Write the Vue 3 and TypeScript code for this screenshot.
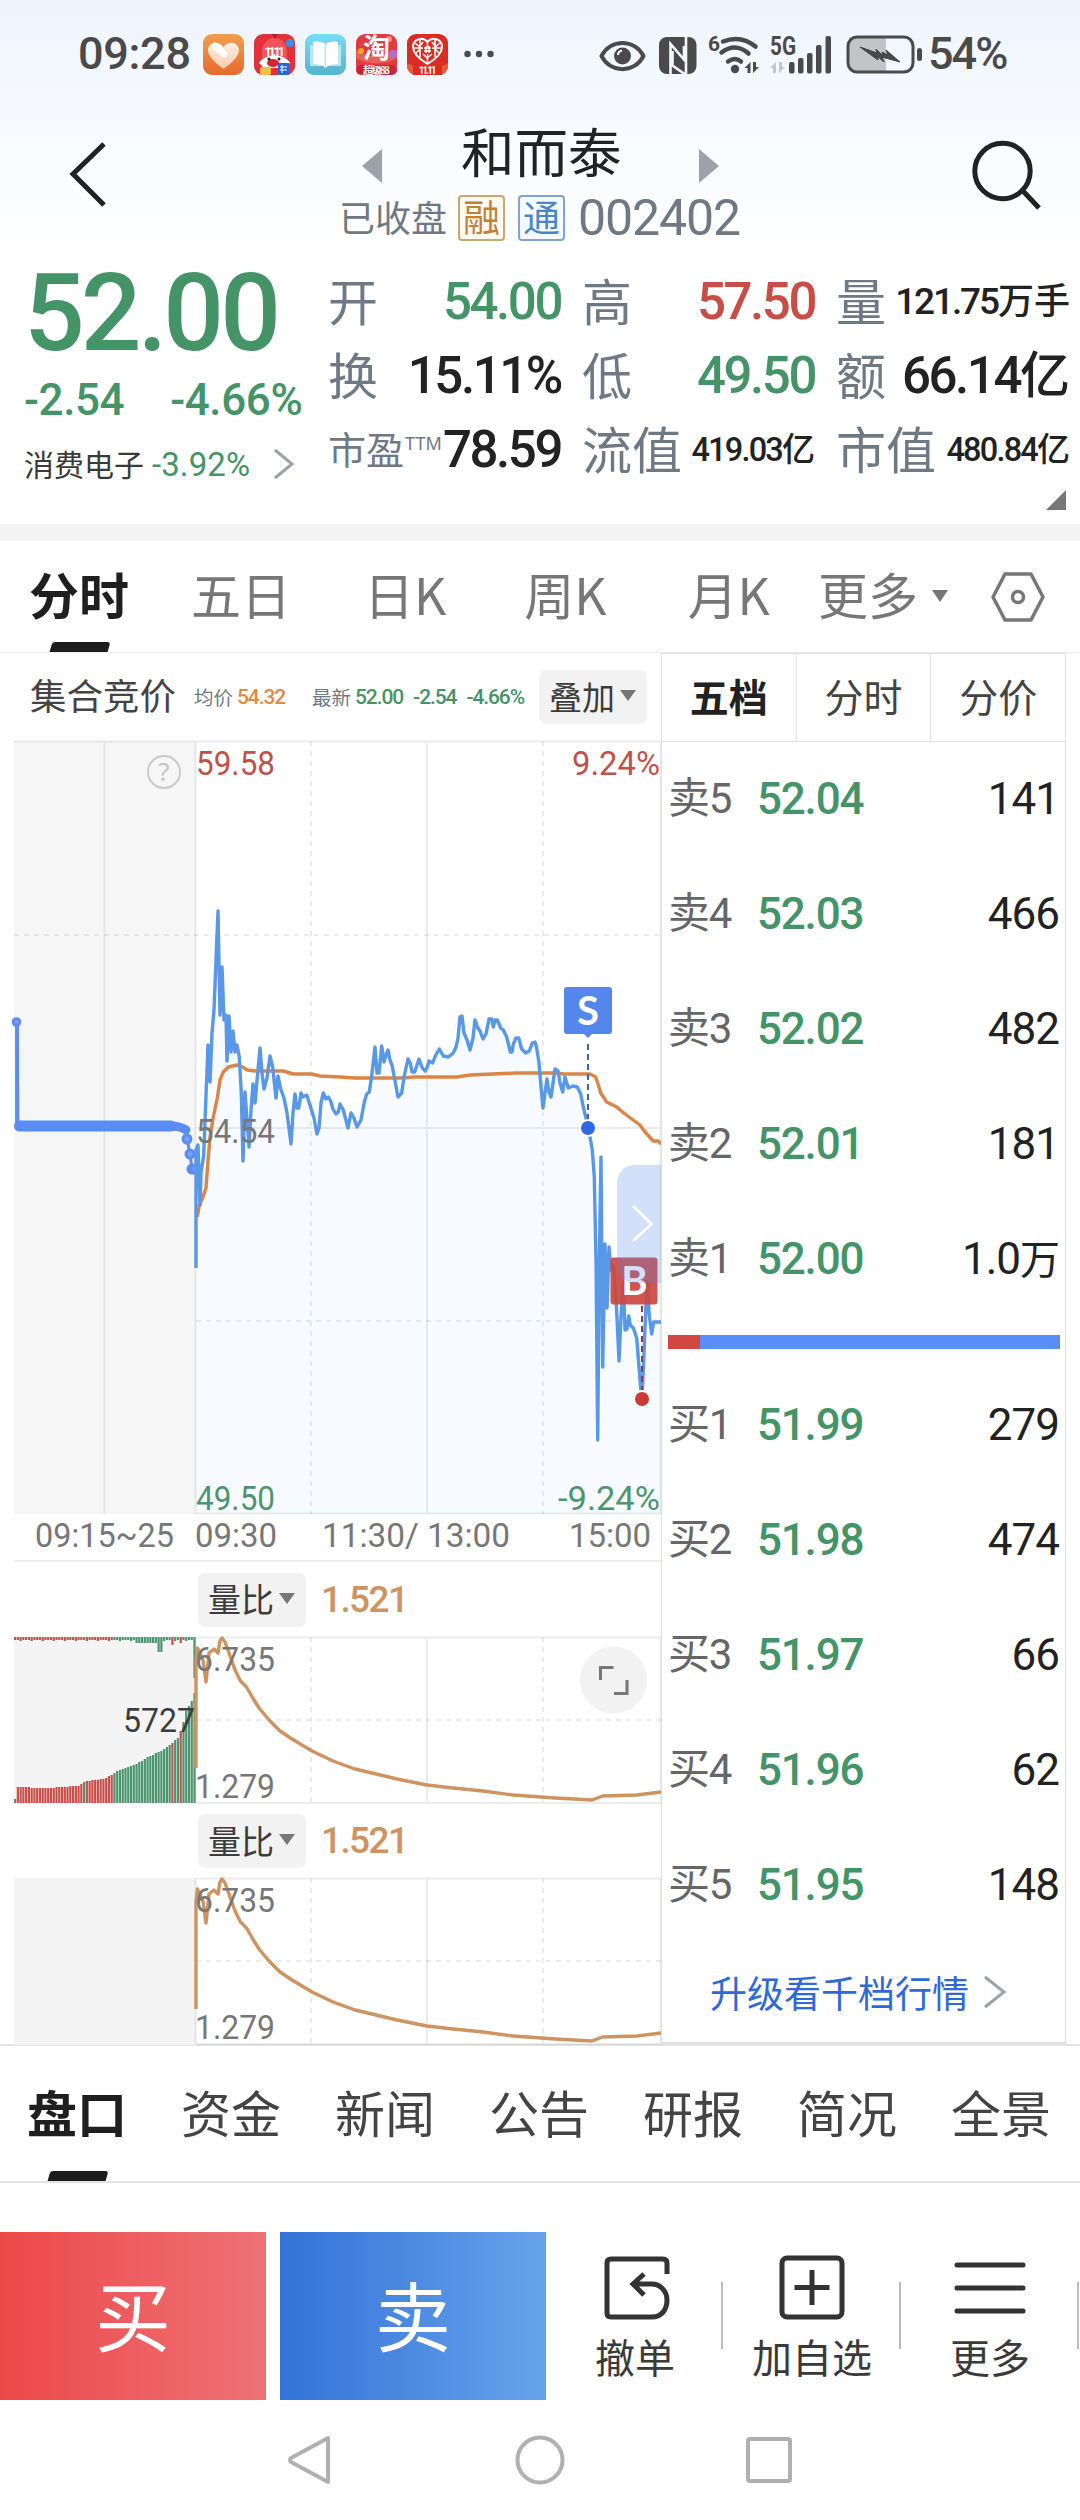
<script setup lang="ts">
interface Stat {
  label: string
  value: string
  unit?: string
  sup?: string
  tone?: 'up' | 'down'
  size?: 'mid' | 'small'
}
interface Level {
  label: string
  price: string
  volume: string
  unit?: string
}
interface Bar {
  x: number
  y: number
  h: number
  fill: string
}

const stats: Stat[] = [
  { label: '开', value: '54.00', tone: 'down' },
  { label: '高', value: '57.50', tone: 'up' },
  { label: '量', value: '121.75', unit: '万手', size: 'mid' },
  { label: '换', value: '15.11%' },
  { label: '低', value: '49.50', tone: 'down' },
  { label: '额', value: '66.14', unit: '亿' },
  { label: '市盈', sup: 'TTM', value: '78.59' },
  { label: '流值', value: '419.03', unit: '亿', size: 'small' },
  { label: '市值', value: '480.84', unit: '亿', size: 'small' },
]

const sells: Level[] = [
  { label: '卖5', price: '52.04', volume: '141' },
  { label: '卖4', price: '52.03', volume: '466' },
  { label: '卖3', price: '52.02', volume: '482' },
  { label: '卖2', price: '52.01', volume: '181' },
  { label: '卖1', price: '52.00', volume: '1.0', unit: '万' },
]
const buys: Level[] = [
  { label: '买1', price: '51.99', volume: '279' },
  { label: '买2', price: '51.98', volume: '474' },
  { label: '买3', price: '51.97', volume: '66' },
  { label: '买4', price: '51.96', volume: '62' },
  { label: '买5', price: '51.95', volume: '148' },
]

const infoTabs = ['盘口', '资金', '新闻', '公告', '研报', '简况', '全景']

const priceLine =
  '196,1268 196,1150 198,1145 200,1205 201,1173 203.7,1155 205.3,1113 208,1045 210,1082 212,1033 214,1010 216,960 218,911 220,1015 222,967 224,1020 226,1015 227,1061 229,1016 231,1052 233,1031 235,1052 237,1045 239.3,1057 241.3,1093 243,1161 245,1092 249,1147 251,1110 253,1084 255,1103 257.7,1073 260,1048 262,1073 264,1089 267,1078 270,1056 272.7,1067 276,1098 278,1076 280.7,1089 284,1098 287,1113 291,1144 293,1113 295,1094 296.7,1108 298.7,1108 301,1093 302.7,1097 306.7,1095 310,1105 314,1118 317,1134 319,1128 321,1103 323.3,1093 326,1099 328.3,1097 330.7,1101 333,1109 336,1114 338.3,1112 340,1104 343.3,1110 348,1128 351,1113 354,1118 357,1127 361,1120 364.3,1102 366.7,1094 369.3,1092 372,1073 375,1047 377,1073 379,1073 381.7,1046 384,1062 386,1055 388,1050 390,1060 392,1065 394.3,1077 398,1097 401.7,1093 404,1077 408,1059 410.3,1063 412,1072 414.7,1072 419,1059 422.3,1068 425.3,1071 427.3,1067 429,1061 432.7,1063 435.3,1056 439.3,1049 443.3,1056 448.3,1057 453.3,1053 456,1047 458,1038 460,1017 462,1016 464,1033 467,1040 470,1050 473,1038 475,1020 477.3,1027 480,1031 483,1039 486,1034 489,1019 491.7,1019 493.3,1027 495,1020 497.3,1020 500.7,1028 503.3,1030 506.7,1037 510.3,1052 512,1052 513.3,1044 516,1038 518.7,1038 521.7,1049 525.7,1053 529.3,1051 532.3,1043 535,1042 536.7,1048 539,1063 540.7,1083 543,1108 545,1093 547,1079 549,1092 551,1097 552.7,1085 555,1069 558,1071 560,1083 562.7,1092 565,1077 568.3,1088 573.3,1086 577.3,1087 580.7,1094 583.3,1107 586,1118 588,1128 590,1137 592.3,1150 594.3,1177 596,1260 597.7,1440 599.3,1260 601,1157 602.7,1367 605,1244 607,1308 609,1247 611,1270 613.3,1265 616,1297 619,1361 621.3,1310 623.3,1282 625,1330 627,1329 628.7,1316 630.3,1325 633.3,1328 636.7,1338 638.7,1363 640.7,1388 642,1399 643.7,1360 646,1303 647.7,1282 649,1313 651.7,1334 653.7,1322 661,1322'
const priceArea = `196,1514 ${priceLine} 661,1514`

const averageLine =
  '197.3,1217 199,1207 203.3,1196 206,1188 207.3,1170 210,1137 213.3,1117 217.3,1098 220,1080 223.3,1072 228.3,1067 236.7,1065 242.7,1067 247.3,1070 255,1071 283.3,1071 293.3,1074 311.7,1074 320,1076 340,1077 355,1078 403.3,1078 413.3,1077 456.7,1077 470,1075 516.7,1073 556.7,1073 563.3,1074 590,1074 595.7,1077 598.3,1085 600.7,1093 606.7,1102 616.7,1107 625,1114 640,1125 645,1132 653.3,1141 658.3,1141 661,1144'

const ratioLine =
  '196,1768 196,1660 197.5,1648 203,1660 206,1682 209,1653 214,1649 218,1653 220,1641 222,1638 225,1642 229,1653 235,1670 240.5,1681 246.5,1687 254,1700 259,1708 269,1720 280,1731 292,1739 312,1751 333,1761 355,1769 372,1773 397,1779 427,1785 453,1788 483,1791 513,1795 555.5,1798 592,1800 602.5,1796 637,1795 661,1792'

const RED = '#cb4f49'
const GREEN = '#4c956e'

/* Auction volume profile: [x, bar top], interpolated between knots. */
const profile: [number, number][] = [
  [14, 1787], [45, 1788], [77, 1786], [84, 1781], [103, 1779], [112, 1774], [116, 1771],
  [128, 1767], [137, 1763], [145, 1758], [160, 1751], [171, 1743], [177, 1738],
  [181, 1727], [185, 1711], [190, 1703], [193, 1694], [196, 1690],
]
function topAt(x: number): number {
  for (let i = 1; i < profile.length; i++) {
    const [x0, y0] = profile[i - 1]
    const [x1, y1] = profile[i]
    if (x <= x1) return y0 + ((y1 - y0) * (x - x0)) / (x1 - x0)
  }
  return 1690
}
const matched: Bar[] = []
const unmatched: Bar[] = []
const pitch = 2.76
for (let i = 0; i < 66; i++) {
  const x = 14 + i * pitch
  const red = (x < 113 && !(x > 81 && x < 85)) || (x > 171 && x < 173.5) || (x > 178 && x < 182)
  const top = i === 0 ? 1799 : Math.round(topAt(x))
  matched.push({ x, y: top, h: 1803 - top, fill: i > 0 && red ? RED : GREEN })
  let h = i % 4 === 2 ? 4 : 3
  if (x > 134 && x < 155) h = 6
  if (x >= 155 && x < 163) h = x > 157 ? 15 : 12
  if (x > 169 && x < 172) h = 8
  if (x > 179 && x < 182) h = 6
  if (i === 65) h = 41
  unmatched.push({ x, y: 1637, h, fill: red ? RED : GREEN })
}

const ratioPanels = [
  { id: 'first', auction: true },
  { id: 'second', auction: false },
]
</script>

<template>
  <div class="screen">
    <header class="top">
      <div class="status">
        <div class="status-left">
          <span class="clock">09:28</span>
          <svg class="app" viewBox="0 0 41 41">
            <defs>
              <linearGradient id="gOrange" x1="0" y1="0" x2="0" y2="1"><stop offset="0" stop-color="#f1a04c" /><stop offset="1" stop-color="#e66a2e" /></linearGradient>
              <linearGradient id="gHeart" x1="0" y1="0" x2="0" y2="1"><stop offset="0" stop-color="#fff" /><stop offset="1" stop-color="#fbdcc4" /></linearGradient>
            </defs>
            <rect width="41" height="41" rx="9" fill="url(#gOrange)" />
            <path d="M20.500 35C14 30 5 23 5 16c0-8 11-10 15.500-3C25 6 36 8 36 16c0 7-9 14-15.500 19z" fill="url(#gHeart)" opacity=".85" />
            <path d="M12 12l9 8" stroke="#fff" stroke-width="7" stroke-linecap="round" />
          </svg>
          <svg class="app" viewBox="0 0 41 41">
            <rect width="41" height="41" rx="9" fill="#e1323a" />
            <path d="M8 16C10 0 31 0 33 16v8H8z" fill="#f5515a" />
            <path d="M18 0l3 5 3-5" fill="#b31f28" />
            <circle cx="36" cy="9" r="4" fill="#3b8ee0" />
            <text x="20.500" y="22" class="tag" font-size="13" textLength="21">11.11</text>
            <path d="M5 29c5-10 26-10 31 0l-5 5H10z" fill="#fff" />
            <ellipse cx="19" cy="29" rx="6" ry="4" fill="#d8262e" />
            <circle cx="15" cy="25" r="1.500" fill="#222" /><circle cx="25" cy="25" r="1.500" fill="#222" />
            <rect x="6" y="33" width="11" height="8" rx="2" fill="#f7c03a" />
            <rect x="24" y="29" width="11" height="12" fill="#2467d8" />
            <path d="M26 33h7M26 36h7M28 31v8" stroke="#fff" stroke-width="1" />
          </svg>
          <svg class="app" viewBox="0 0 41 41">
            <defs><linearGradient id="gTeal" x1="0" y1="0" x2="0" y2="1"><stop offset="0" stop-color="#79dcf4" /><stop offset="1" stop-color="#55b4cc" /></linearGradient></defs>
            <rect width="41" height="41" rx="9" fill="url(#gTeal)" />
            <path d="M5 11h31v21H5z" fill="#b5e8f2" />
            <path d="M8 8c5-1 10 0 12.500 2C23 8 28 7 33 8v22c-5 0-10 1-12.500 4C18 31 13 30 8 30z" fill="#fff" />
            <path d="M20.500 10v24" stroke="#bde3eb" stroke-width="1.500" />
          </svg>
          <svg class="app" viewBox="0 0 41 41">
            <rect width="41" height="41" rx="9" fill="#e23a3f" />
            <path d="M0 24c10 7 31 7 41 0v-8c-10 8-31 8-41 0z" fill="#e8605c" />
            <circle cx="5" cy="17" r="3" fill="#f5a623" /><circle cx="37" cy="20" r="4" fill="#b06be0" /><circle cx="33" cy="5" r="3" fill="#f88" />
            <text x="20.500" y="24" class="tag cjk" font-size="27">淘</text>
            <rect y="31" width="41" height="10" rx="5" fill="#c9243a" />
            <text x="20.500" y="39.500" class="tag cjk" font-size="10" textLength="27">超级88</text>
          </svg>
          <svg class="app" viewBox="0 0 41 41">
            <rect width="41" height="41" rx="9" fill="#d92c23" />
            <path d="M0 29c8 6 33 6 41 0v3a9 9 0 0 1-9 9H9a9 9 0 0 1-9-9z" fill="#ea5a35" />
            <path d="M6 31h29v10H6z" fill="#d92c23" />
            <path d="M20.500 30C14 26 6 20 6 13c0-8 10-11 14.500-5C25 2 35 5 35 13c0 7-8 13-14.500 17z" fill="#d92c23" stroke="#fff" stroke-width="2" />
            <path d="M13 5v18M20.500 8v5M28 5v18M7 14h9M25 14h9M8 9l6 5-5 5M33 9l-6 5 5 5M16 8l-3 4M25 8l3 4M20.500 20v9M16 20l4 4 5-4" stroke="#fff" stroke-width="1.500" fill="none" />
            <path d="M17 14h7M17 17h7M19 12v7M22 12v7" stroke="#fff" stroke-width="1.300" />
            <text x="20.500" y="39.500" class="tag" font-size="10" textLength="18">11.11</text>
          </svg>
          <svg class="dots" viewBox="0 0 30 8"><circle cx="3.500" cy="4" r="3.200" /><circle cx="15" cy="4" r="3.200" /><circle cx="26.500" cy="4" r="3.200" /></svg>
        </div>
        <svg class="sys" viewBox="596 30 328 46">
          <path d="M601.500 55c9-17.500 33-17.500 42 0c-9 17.500-33 17.500-42 0z" fill="none" stroke="#4a4a4a" stroke-width="4" stroke-linejoin="round" />
          <circle cx="622.500" cy="55" r="8.500" /><path d="M618 54a5 5 0 0 1 4-4.500" stroke="#fff" stroke-width="2" fill="none" />
          <rect x="659" y="36" width="37.500" height="37" rx="8" />
          <path d="M670.500 74V43l13.500 15.500V45M672.500 50v14.500L686 74V36" fill="none" stroke="#f4f7fd" stroke-width="2.600" />
          <text x="708" y="50" font-size="21" font-weight="700">6</text>
          <g fill="none" stroke="#4a4a4a" stroke-width="4.500" stroke-linecap="round">
            <path d="M723 40.500q18-7 32.500 5" /><path d="M721.500 51.500q14-10.500 27 1" /><path d="M728 60.500q7-5 13 0" />
          </g>
          <circle cx="735" cy="68" r="4.200" />
          <path d="M744.500 67l6-6v11h-3v-5zM753 61v11l6-6h-3v-5z" />
          <text x="770" y="53.500" font-size="25" font-weight="700" textLength="26" lengthAdjust="spacingAndGlyphs">5G</text>
          <path d="M770 67l6-6v11h-3v-5zM779 61v11l6-6h-3v-5z" fill="#c4c6ca" />
          <rect x="789" y="61" width="5.500" height="11.500" rx="2" /><rect x="798" y="57" width="5.500" height="15.500" rx="2" />
          <rect x="807" y="52" width="5.500" height="20.500" rx="2" /><rect x="816" y="44" width="5.500" height="28.500" rx="2" />
          <rect x="825.500" y="35" width="5.500" height="37.500" rx="2" />
          <path d="M857 36h29v35h-29a9 9 0 0 1-9-9V45a9 9 0 0 1 9-9z" fill="#c2c4c8" />
          <rect x="848" y="36" width="65" height="35" rx="9" fill="none" stroke="#4a4a4a" stroke-width="3" />
          <rect x="917" y="47" width="5" height="13" rx="2.500" />
          <path d="M860 46l17 6-1-4 7 7-1-4 6 3-2-5 14 12-18-5 2 5-7-6 1 4z" stroke="#3d3d3d" stroke-width="1" />
        </svg>
        <span class="clock battery">54%</span>
      </div>

      <div class="nav">
        <svg class="back" viewBox="0 0 40 68"><path d="M37 4L6 34l31 31" fill="none" stroke="#222" stroke-width="5" /></svg>
        <div class="name-block">
          <div class="name-row">
            <svg class="arrow" viewBox="0 0 20 34"><path d="M0 17L20 0v34z" fill="#9ba2ab" /></svg>
            <h1>和而泰</h1>
            <svg class="arrow" viewBox="0 0 20 34"><path d="M20 17L0 0v34z" fill="#9ba2ab" /></svg>
          </div>
          <div class="code-row">
            <span class="state">已收盘</span>
            <span class="badge gold">融</span>
            <span class="badge azure">通</span>
            <span class="code">002402</span>
          </div>
        </div>
        <svg class="search" viewBox="0 0 72 72"><circle cx="33.500" cy="33" r="27.700" /><path d="M54 53l16 17" /></svg>
      </div>

      <section class="quote">
        <div class="last">
          <div class="price">52.00</div>
          <div class="change"><span>-2.54</span><span>-4.66%</span></div>
          <div class="sector">
            <span class="sector-name">消费电子</span><span class="sector-pct">-3.92%</span>
            <svg viewBox="0 0 22 32"><path d="M2 2l17 14L2 30" fill="none" stroke="#9ba2ab" stroke-width="3" /></svg>
          </div>
        </div>
        <div class="stats">
          <div v-for="s in stats" :key="s.label" class="stat">
            <span class="stat-label" :class="{ tight: s.sup }">{{ s.label }}<sup v-if="s.sup">{{ s.sup }}</sup></span>
            <span class="stat-value" :class="[s.tone, s.size]">{{ s.value }}<span v-if="s.unit" class="unit">{{ s.unit }}</span></span>
          </div>
        </div>
        <i class="corner"></i>
      </section>
    </header>

    <nav class="periods">
      <span class="active">分时</span><span>五日</span><span>日K</span><span>周K</span><span>月K</span>
      <span class="more">更多<i class="caret"></i></span>
      <svg viewBox="0 0 56 52"><path d="M15 3h26l12 23-12 23H15L3 26z" /><circle cx="28" cy="26" r="5.500" /></svg>
    </nav>

    <main class="board">
      <div class="charts">
        <div class="legend">
          <span class="mode">集合竞价</span>
          <span class="pair avg">均价<b>54.32</b></span>
          <span class="pair now">最新<b>52.00</b><b>-2.54</b><b>-4.66%</b></span>
          <button class="pick">叠加<i class="caret"></i></button>
        </div>

        <svg class="main-chart" viewBox="0 741 662 821">
          <rect x="14" y="741" width="182" height="773" fill="#f6f6f6" />
          <polygon :points="priceArea" fill="#f7fbff" />
          <g class="grid">
            <path d="M14 741.500H661M196 1128H661M196 1513.500H661M14 1561H661M104.500 741V1514M195.500 741V1514M427 741V1514M660.500 741V1514" />
            <path class="dash" d="M14 935H661M196 1321H661M311 741V1514M543 741V1514" />
          </g>
          <g fill="none" stroke="#c9c9c9" stroke-width="2"><circle cx="164" cy="772" r="16" /></g>
          <text x="164" y="781" class="hint">?</text>

          <g fill="none" stroke-linejoin="round" stroke-linecap="round">
            <path d="M17 1022V1125" stroke="#6f95ee" stroke-width="4" />
            <path d="M17 1022l1 104H171q10 0 15 4" stroke="#5b8cf5" stroke-width="3" />
            <path d="M19.500 1126H171" stroke="#5b8cf5" stroke-width="11" />
            <path d="M171 1126q9 0 15 4" stroke="#5b8cf5" stroke-width="9" />
            <path d="M186 1130l1 9 3 15 2 15h3" stroke="#5b8cf5" stroke-width="3" />
          </g>
          <g fill="#7aa1f6" stroke="#5b8cf5" stroke-width="3">
            <circle cx="16.500" cy="1022" r="3.300" /><circle cx="187" cy="1139" r="4" /><circle cx="190" cy="1154" r="4" /><circle cx="192" cy="1169" r="4" /><circle cx="195" cy="1169" r="4" />
          </g>
          <polyline :points="averageLine" class="curve" stroke="#dc8546" />
          <polyline :points="priceLine" class="curve" stroke="#5898e6" stroke-width="3.400" />

          <path d="M588 1044V1120" stroke="#3e659c" stroke-width="2" stroke-dasharray="6 4" />
          <path d="M567 987h42q3 0 3 3v41q0 3-3 3h-17l-4 4-4-4h-17q-3 0-3-3v-41q0-3 3-3z" fill="#5487ec" />
          <circle cx="588" cy="1128" r="8" fill="#2f68e0" stroke="#fff" stroke-width="2" />
          <text x="588" y="1025" class="mark">S</text>

          <path d="M642 1306V1392" stroke="#8f3b4a" stroke-width="2" stroke-dasharray="6 4" />
          <rect x="610.500" y="1257.500" width="47" height="47" rx="3" fill="#cc4640" opacity=".92" />
          <text x="634.500" y="1295" class="mark">B</text>
          <circle cx="642" cy="1399" r="8" fill="#cc3833" stroke="#fff" stroke-width="2" />
          <path d="M661 1165h-24q-20 0-20 20v78q0 20 20 20h24z" fill="#5388e8" opacity=".26" />
          <path d="M634 1207l17.500 17L634 1240" fill="none" stroke="#fff" stroke-width="3" stroke-linecap="round" stroke-linejoin="round" />

          <g class="axis">
            <text x="196" y="775" textLength="79" lengthAdjust="spacingAndGlyphs" fill="#bf514b">59.58</text>
            <text x="572" y="775" textLength="88" lengthAdjust="spacingAndGlyphs" fill="#bf514b">9.24%</text>
            <text x="196" y="1143" textLength="79" lengthAdjust="spacingAndGlyphs">54.54</text>
            <text x="196" y="1510" textLength="79" lengthAdjust="spacingAndGlyphs" fill="#4c956e">49.50</text>
            <text x="558" y="1510" textLength="102" lengthAdjust="spacingAndGlyphs" fill="#4c956e">-9.24%</text>
            <text x="35" y="1547" textLength="139" lengthAdjust="spacingAndGlyphs">09:15~25</text>
            <text x="195" y="1547" textLength="82" lengthAdjust="spacingAndGlyphs">09:30</text>
            <text x="322" y="1547" textLength="188" lengthAdjust="spacingAndGlyphs">11:30/ 13:00</text>
            <text x="569" y="1547" textLength="82" lengthAdjust="spacingAndGlyphs">15:00</text>
          </g>
        </svg>

        <section v-for="p in ratioPanels" :key="p.id" class="ratio">
          <div class="ratio-head">
            <button class="pick">量比<i class="caret"></i></button>
            <span class="ratio-value">1.521</span>
          </div>
          <svg viewBox="0 1637 662 167">
            <rect x="14" y="1637" width="182" height="167" fill="#f4f4f4" />
            <g class="grid">
              <path d="M196 1637.500H661M196 1803H661M195.500 1637V1803M427 1637V1803M660.500 1637V1803" />
              <path class="dash" d="M196 1720H661M311 1637V1803M543 1637V1803" />
            </g>
            <template v-if="p.auction">
              <rect v-for="(b, i) in matched" :key="'m' + i" :x="b.x" :y="b.y" width="2.200" :height="b.h" :fill="b.fill" />
              <rect v-for="(b, i) in unmatched" :key="'u' + i" :x="b.x" :y="b.y" width="2.200" :height="b.h" :fill="b.fill" />
            </template>
            <polyline :points="ratioLine" class="curve" stroke="#cf935f" stroke-width="2.800" />
            <g class="axis">
              <text v-if="p.auction" x="123" y="1732" textLength="72" lengthAdjust="spacingAndGlyphs" fill="#3c3c3c">5727</text>
              <text x="195" y="1671" textLength="80" lengthAdjust="spacingAndGlyphs">6.735</text>
              <text x="195" y="1798" textLength="80" lengthAdjust="spacingAndGlyphs">1.279</text>
            </g>
            <g v-if="p.auction">
              <circle cx="613.500" cy="1680" r="33.500" fill="#f2f2f2" />
              <path d="M600.500 1680v-12.500h13M614 1693.500h13v-13.500" fill="none" stroke="#777" stroke-width="3" />
            </g>
          </svg>
        </section>
      </div>

      <aside class="book">
        <div class="book-tabs"><span class="active">五档</span><span>分时</span><span>分价</span></div>
        <div class="levels">
          <div v-for="l in sells" :key="l.label" class="level">
            <span class="side">{{ l.label }}</span><span class="bid">{{ l.price }}</span>
            <span class="vol">{{ l.volume }}<span v-if="l.unit" class="unit">{{ l.unit }}</span></span>
          </div>
        </div>
        <div class="balance"><i></i></div>
        <div class="levels">
          <div v-for="l in buys" :key="l.label" class="level">
            <span class="side">{{ l.label }}</span><span class="bid">{{ l.price }}</span>
            <span class="vol">{{ l.volume }}</span>
          </div>
        </div>
        <div class="upgrade">
          升级看千档行情
          <svg viewBox="0 0 22 34"><path d="M1 2l19 15L1 32" fill="none" stroke="#9ba2ab" stroke-width="3" /></svg>
        </div>
      </aside>
    </main>

    <nav class="info-tabs">
      <span v-for="(t, i) in infoTabs" :key="t" :class="{ active: i === 0 }">{{ t }}</span>
    </nav>

    <footer class="actions">
      <button class="trade buy">买</button>
      <button class="trade sell">卖</button>
      <div class="tool cancel">
        <svg viewBox="0 0 70 66"><path d="M67 19V8q0-4-4-4H11Q7 4 7 8v50q0 4 4 4h41c10 0 15-8 15-17s-7-16-15-16H35M44 19L33 29l11 11" /></svg>
        <span>撤单</span>
      </div>
      <div class="tool add">
        <svg viewBox="0 0 70 66"><rect x="5" y="3" width="60" height="59" rx="5" /><path d="M35 15v35M17.500 32.500h35" /></svg>
        <span>加自选</span>
      </div>
      <div class="tool more-tool">
        <svg viewBox="0 0 70 66"><path d="M2 10h66M2 33h66M2 56h66" stroke-linecap="round" /></svg>
        <span>更多</span>
      </div>
    </footer>

    <div class="keys">
      <svg viewBox="0 0 48 52"><path d="M42 4v44L5 28q-2-2 0-4z" /></svg>
      <svg viewBox="0 0 52 52"><circle cx="26" cy="26" r="22.500" /></svg>
      <svg viewBox="0 0 52 52"><rect x="5" y="5" width="42" height="42" rx="2" /></svg>
    </div>
  </div>
</template>

<style>
body {
  margin: 0;
  background: #fff;
}
</style>

<style scoped>
.screen {
  width: 1080px;
  height: 2520px;
  overflow: hidden;
  background: #fff;
  color: #222;
  font-family: 'Noto Sans CJK SC', sans-serif;
  white-space: nowrap;
}
.screen * {
  box-sizing: border-box;
}
svg {
  display: block;
  flex: none;
  overflow: visible;
}
button {
  border: 0;
  padding: 0;
  font-family: inherit;
}
.top {
  height: 524px;
  background: linear-gradient(#eff4fe 0, #fff 250px);
}

/* status bar */
.status {
  height: 108px;
  padding: 0 70px 0 78px;
  display: flex;
  align-items: center;
  justify-content: space-between;
}
.status-left {
  display: flex;
  align-items: center;
  gap: 10px;
}
.clock {
  width: 115px;
  font: 500 45px/60px Roboto, sans-serif;
  letter-spacing: -0.3px;
  color: #4a4a4a;
}
.app {
  width: 41px;
  height: 41px;
}
.tag {
  fill: #fff;
  text-anchor: middle;
  font-family: Roboto, sans-serif;
  font-weight: 700;
}
.tag.cjk {
  font-family: 'Noto Sans CJK SC', sans-serif;
}
.dots {
  width: 30px;
  height: 8px;
  margin-left: 6px;
  fill: #4a4a4a;
}
.sys {
  width: 328px;
  height: 46px;
  margin-left: auto;
  fill: #4a4a4a;
  font-family: Roboto, sans-serif;
}
.battery {
  width: 82px;
  margin-left: 4px;
  letter-spacing: -2px;
}

/* title */
.nav {
  height: 142px;
  padding: 0 39px 0 67px;
  display: flex;
  align-items: flex-start;
}
.back {
  width: 40px;
  height: 68px;
  margin-top: 32px;
}
.name-block {
  flex: 1;
  padding-left: 19px;
}
.name-row {
  display: flex;
  justify-content: center;
  align-items: center;
  height: 84px;
  gap: 79px;
  margin-bottom: 2px;
  padding-right: 14px;
}
.name-row h1 {
  margin: 0;
  width: 159px;
  font-size: 53.5px;
  font-weight: 400;
  line-height: 84px;
}
.arrow {
  width: 20px;
  height: 34px;
  margin-top: 32px;
}
.code-row {
  display: flex;
  align-items: center;
  height: 48px;
  padding-left: 213px;
  font-size: 36px;
  color: #6f7985;
}
.state {
  height: 50px;
  line-height: 46px;
}
.badge {
  width: 47px;
  height: 46px;
  margin-left: 11px;
  border: 2px solid;
  border-radius: 4px;
  font-size: 37px;
  line-height: 38px;
  text-align: center;
}
.badge + .badge {
  margin-left: 13px;
}
.gold {
  color: #c08239;
  border-color: #cfa673;
  background: #fffaf2;
}
.azure {
  color: #4d84c6;
  border-color: #7fa6d2;
  background: #f4faff;
}
.code {
  margin-left: 13px;
  font: 400 50px/48px Roboto, sans-serif;
  letter-spacing: -1.1px;
}
.search {
  width: 72px;
  height: 72px;
  margin-top: 30px;
  fill: none;
  stroke: #222;
  stroke-width: 5px;
}

/* quote */
.quote {
  position: relative;
  display: flex;
  height: 274px;
  padding-left: 24px;
}
.last {
  width: 305px;
  color: #459468;
  font-family: Roboto, sans-serif;
}
.price {
  height: 124px;
  font-size: 107px;
  font-weight: 500;
  line-height: 127px;
  letter-spacing: -4px;
}
.change {
  display: flex;
  gap: 46px;
  height: 52px;
  font-size: 44px;
  font-weight: 500;
  line-height: 53px;
}
.change span {
  letter-spacing: -0.4px;
}
.sector {
  display: flex;
  align-items: center;
  height: 76px;
}
.sector-name {
  font: 400 30px/42px 'Noto Sans CJK SC', sans-serif;
  height: 44px;
  color: #3a3a3a;
}
.sector-pct {
  margin-left: 8px;
  width: 121px;
  font-size: 33px;
  letter-spacing: 0.1px;
}
.sector svg {
  width: 22px;
  height: 32px;
}
.stats {
  display: grid;
  grid-template-columns: 231px 231px 232px;
  grid-auto-rows: 74px;
  column-gap: 23px;
  padding-top: 15px;
  margin-left: -1px;
}
.stat {
  display: flex;
  align-items: center;
  justify-content: space-between;
  height: 74px;
}
.stat-label {
  height: 72px;
  font-size: 50px;
  line-height: 67px;
  color: #6f7985;
}
.stat-label.tight {
  font-size: 38px;
}
sup {
  margin-left: 1px;
  font: 400 18px/1 'Noto Sans', sans-serif;
  vertical-align: 14px;
}
.stat-value {
  font: 500 51px/72px Roboto, sans-serif;
  letter-spacing: -2.4px;
  margin-right: -2px;
  color: #222;
}
.stat-value .unit {
  font: 500 50px/1 'Noto Sans CJK SC', sans-serif;
  letter-spacing: 0;
}
.stat-value.up {
  color: #c84d46;
}
.stat-value.down {
  color: #459468;
}
.stat-value.mid {
  font-size: 37px;
  letter-spacing: -2.1px;
}
.stat-value.mid .unit {
  font-size: 36px;
}
.stat-value.small {
  font-size: 32.5px;
  letter-spacing: -1.8px;
}
.stat-value.small .unit {
  font-size: 33px;
}
.corner {
  position: absolute;
  right: 14px;
  bottom: 14px;
  border-bottom: 20px solid #777;
  border-left: 20px solid transparent;
}

/* period tabs */
.periods {
  display: flex;
  height: 129px;
  padding-left: 29px;
  border-top: 17px solid #f4f4f4;
  border-bottom: 1px solid #eee;
  font-size: 50px;
  line-height: 105px;
  color: #777;
}
.periods > span {
  margin-right: 65px;
}
.periods > span:nth-child(2) {
  margin-left: -3px;
  margin-right: 73px;
}
.periods > span:nth-child(3) {
  margin-right: 78px;
}
.periods > span:nth-child(4) {
  margin-right: 81px;
}
.periods > span:nth-child(5) {
  margin-right: 48px;
}
.periods .active,
.info-tabs .active {
  position: relative;
  color: #1f1f1f;
  font-weight: 700;
}
.periods .active::after,
.info-tabs .active::after {
  content: '';
  position: absolute;
  left: 22px;
  bottom: 0;
  width: 58px;
  height: 10px;
  border-radius: 3px 3px 0 0;
  background: #1c1c1c;
  transform: skewX(-16deg);
}
.periods .more {
  display: flex;
  height: 108px;
  margin-right: 42px;
}
.more .caret {
  margin: 49px 0 0 14px;
}
.periods svg {
  width: 56px;
  height: 52px;
  margin-top: 30px;
  fill: none;
  stroke: #777;
  stroke-width: 3.5px;
  stroke-linejoin: round;
}
.caret {
  display: inline-block;
  height: 12px;
  border: 8px solid transparent;
  border-top: 12px solid #777;
  border-bottom: 0;
}

/* board */
.board {
  display: flex;
  height: 1391px;
}
.charts {
  width: 661px;
}
.charts > svg,
.ratio > svg {
  width: 662px;
}
.legend {
  display: flex;
  align-items: center;
  height: 88px;
  padding: 0 14px 0 30px;
}
.mode {
  width: 164px;
  height: 84px;
  font-size: 36.5px;
  line-height: 80px;
  color: #444;
}
.pair {
  display: flex;
  align-items: center;
  font-size: 19.5px;
  line-height: 30px;
  color: #6f7985;
}
.pair b {
  margin-left: 4px;
  font: 500 21px/30px Roboto, sans-serif;
  letter-spacing: -1.1px;
}
.pair b + b {
  margin-left: 10px;
}
.avg {
  width: 118px;
}
.avg b {
  color: #e08a45;
}
.now b {
  color: #459468;
}
.pick {
  display: flex;
  align-items: center;
  width: 108px;
  height: 54px;
  margin-left: auto;
  padding: 0 0 3px 10px;
  border-radius: 7px;
  background: #f2f2f2;
  font-size: 33px;
  line-height: 50px;
  color: #3c3c3c;
}
.pick .caret {
  height: 11px;
  margin-left: 5px;
  border-width: 11px 8px 0;
}
.main-chart {
  height: 821px;
}
.grid {
  fill: none;
  stroke: #7d8b98;
  stroke-opacity: 0.16;
  stroke-width: 2px;
}
.dash {
  stroke-dasharray: 5 5;
}
.curve {
  fill: none;
  stroke-width: 3.4px;
  stroke-linejoin: round;
}
.hint {
  font: 400 26px 'Noto Sans', sans-serif;
  fill: #c4c4c4;
  text-anchor: middle;
}
.mark {
  font: 700 40px Lato, sans-serif;
  fill: #fff;
  text-anchor: middle;
}
.axis {
  font-family: Roboto, sans-serif;
  font-size: 34px;
  fill: #777;
}
.ratio-head {
  display: flex;
  align-items: center;
  height: 75px;
  padding-left: 198px;
}
.ratio + .ratio .ratio-head {
  height: 74px;
}
.ratio-head .pick {
  margin-left: 0;
}
.ratio > svg {
  height: 167px;
}
.ratio-value {
  margin-left: 15px;
  font: 500 37px/50px Roboto, sans-serif;
  letter-spacing: -1.6px;
  color: #cf935f;
}

/* order book */
.book {
  width: 405px;
  border: 1px solid #e0e0e0;
  border-width: 1px 1px 2px;
}
.book-tabs {
  display: flex;
  height: 88px;
  border-bottom: 1px solid #e3e3e3;
  font-size: 39px;
  line-height: 83px;
  color: #444;
  text-align: center;
}
.book-tabs span {
  flex: 1;
}
.book-tabs span + span {
  border-left: 1px solid #e3e3e3;
}
.book-tabs .active {
  font-weight: 700;
  color: #222;
}
.level {
  display: flex;
  align-items: center;
  height: 114.8px;
  padding: 0 6px 0 6px;
}
.side {
  width: 89px;
  font: 400 42px/60px Roboto, 'Noto Sans CJK SC', sans-serif;
  letter-spacing: -1.2px;
  color: #666;
}
.bid {
  font: 500 44px/60px Roboto, sans-serif;
  letter-spacing: -1.2px;
  color: #459468;
}
.vol {
  margin-left: auto;
  font: 400 44px/60px Roboto, sans-serif;
  letter-spacing: -1px;
  color: #222;
}
.vol .unit {
  font: 400 40px/1 'Noto Sans CJK SC', sans-serif;
}
.balance {
  height: 14px;
  margin: 19px 5px 19px 6px;
  background: #5a8df6;
}
.balance i {
  display: block;
  width: 32px;
  height: 14px;
  background: #d2473f;
}
.upgrade {
  display: flex;
  align-items: center;
  height: 100px;
  padding-left: 48px;
  font-size: 37px;
  line-height: 96px;
  color: #3068d6;
}
.upgrade svg {
  width: 22px;
  height: 34px;
  margin-left: 15px;
}

/* info tabs */
.info-tabs {
  display: flex;
  gap: 54px;
  height: 139px;
  padding-left: 27px;
  border-top: 2px solid #e4e4e4;
  border-bottom: 2px solid #e4e4e4;
  font-size: 50px;
  line-height: 130px;
  color: #444;
}

/* bottom actions */
.actions {
  display: flex;
  height: 217px;
  padding-top: 49px;
}
.trade {
  width: 266px;
  height: 168px;
  margin-right: 14px;
  padding-bottom: 6px;
  color: #fff;
  font-size: 76px;
  line-height: 160px;
}
.buy {
  background: linear-gradient(90deg, #ed4848, #ee7276);
}
.sell {
  background: linear-gradient(90deg, #3273d8, #68a3eb);
}
.tool {
  position: relative;
  display: flex;
  flex-direction: column;
  align-items: center;
  width: 178px;
  padding-top: 23px;
  font-size: 40px;
  line-height: 60px;
  color: #3a3a3a;
}
.tool svg {
  width: 70px;
  height: 66px;
  fill: none;
  stroke: #333;
  stroke-width: 5px;
}
.tool span {
  margin-top: 5px;
}
.tool::after {
  content: '';
  position: absolute;
  right: 0;
  top: 50px;
  width: 2px;
  height: 67px;
  background: #bbb;
}
.cancel {
  width: 163px;
  padding-right: 13px;
}
.keys {
  display: flex;
  align-items: center;
  justify-content: space-between;
  height: 120px;
  padding: 0 285px 0 284px;
}
.keys svg {
  width: 52px;
  height: 52px;
  fill: none;
  stroke: #b0b0b0;
  stroke-width: 4px;
  stroke-linejoin: round;
}
</style>
